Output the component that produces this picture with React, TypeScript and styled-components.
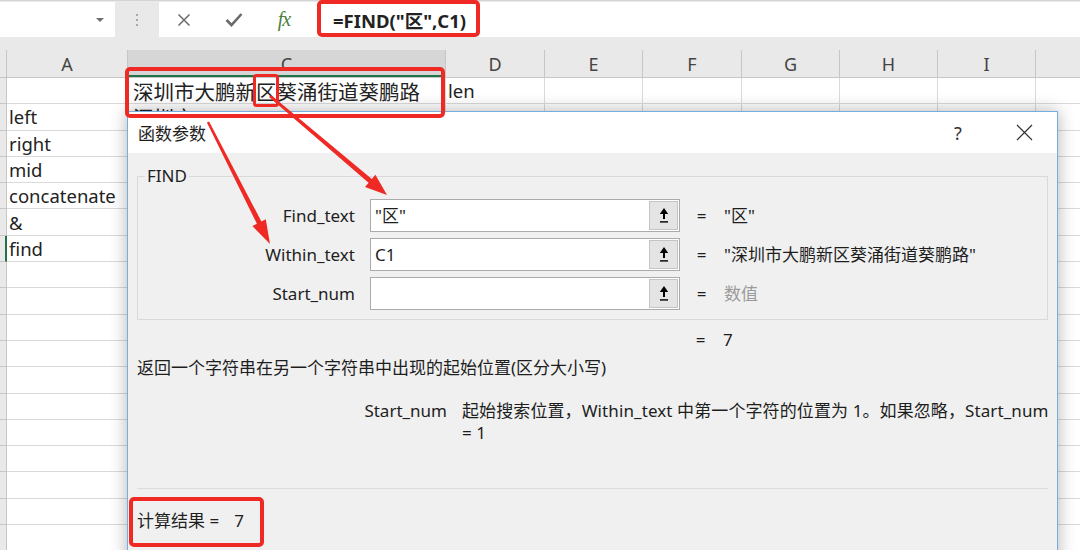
import React from 'react';
import styled, { createGlobalStyle } from 'styled-components';

const GlobalStyle = createGlobalStyle`
  html, body { margin: 0; padding: 0; background: #fff; }
  body { font-family: "Noto Sans", "Noto Sans CJK SC", sans-serif; }
`;

const Page = styled.div`
  position: relative;
  width: 1080px;
  height: 550px;
  overflow: hidden;
  background: #fff;
  font-family: "Noto Sans", "Noto Sans CJK SC", sans-serif;
  color: #222;
`;

/* ---------- formula bar ---------- */
const FormulaBar = styled.div`
  display: flex;
  height: 37px;
  box-sizing: border-box;
  padding-top: 1px;
  border-top: 1px solid #d4d4d4;
  background: #e9e9e9;
`;

const NameBox = styled.div`
  width: 115px;
  flex: none;
  background: #fff;
  display: flex;
  align-items: center;
  justify-content: flex-end;
  padding-right: 11px;
  box-sizing: border-box;
`;

const Caret = styled.div`
  width: 0;
  height: 0;
  border-left: 4px solid transparent;
  border-right: 4px solid transparent;
  border-top: 4px solid #6e6e6e;
`;

const Grip = styled.div`
  width: 44px;
  flex: none;
  display: flex;
  flex-direction: column;
  align-items: center;
  justify-content: center;
  gap: 3px;
`;

const GripDot = styled.div`
  width: 2px;
  height: 2px;
  background: #a8a8a8;
`;

const IconBox = styled.div`
  width: 151px;
  flex: none;
  background: #fff;
  display: flex;
`;

const IconSlot = styled.div`
  width: 50px;
  display: flex;
  align-items: center;
  justify-content: center;
`;

const Fx = styled.span`
  font-family: "Liberation Serif", serif;
  font-style: italic;
  font-size: 20px;
  color: #4d7f3d;
  letter-spacing: -1px;
`;

const FormulaInput = styled.div`
  flex: 1;
  background: #fff;
  display: flex;
  align-items: center;
  padding-left: 23px;
  font-weight: 700;
  font-size: 18.5px;
  color: #222;
  white-space: nowrap;
`;

const Band = styled.div`
  height: 13px;
  background: #e9e9e9;
`;

/* ---------- sheet ---------- */
const HeaderRow = styled.div`
  display: flex;
  height: 28px;
  background: #e9e9e9;
  border-bottom: 1px solid #c6c6c6;
  box-sizing: border-box;
`;

const Corner = styled.div`
  width: 7px;
  flex: none;
  border-right: 1px solid #c6c6c6;
  box-sizing: border-box;
`;

const ColHeader = styled.div<{ $w: number; $selected?: boolean }>`
  width: ${(p) => p.$w}px;
  flex: none;
  box-sizing: border-box;
  border-right: 1px solid #c6c6c6;
  display: flex;
  align-items: center;
  justify-content: center;
  font-size: 18px;
  color: #444;
  background: ${(p) => (p.$selected ? '#d6d6d6' : 'transparent')};
  box-shadow: ${(p) => (p.$selected ? 'inset 0 -2px 0 #217346' : 'none')};
`;

const Row = styled.div`
  display: flex;
  height: 26.3px;
`;

const RowHeader = styled.div<{ $active?: boolean }>`
  width: 7px;
  flex: none;
  box-sizing: border-box;
  background: #e9e9e9;
  border-bottom: 1px solid #c6c6c6;
  border-right: ${(p) => (p.$active ? '2px solid #217346' : '1px solid #c6c6c6')};
`;

const Cell = styled.div<{ $w: number }>`
  width: ${(p) => p.$w}px;
  flex: none;
  box-sizing: border-box;
  border-right: 1px solid #dadada;
  border-bottom: 1px solid #dadada;
  display: flex;
  align-items: center;
  padding-left: 2px;
  white-space: nowrap;
  overflow: hidden;
`;

const CellText = styled.span<{ $cjk?: boolean }>`
  font-size: ${(p) => (p.$cjk ? '20.5px' : '18.5px')};
  padding-left: ${(p) => (p.$cjk ? '3px' : '0')};
  color: #222;
`;

/* ---------- dialog ---------- */
const Dialog = styled.div`
  position: absolute;
  left: 127px;
  top: 111px;
  width: 931px;
  height: 470px;
  box-sizing: border-box;
  border: 1px solid #78acdf;
  background: #f0f0f0;
  box-shadow: 0 0 16px rgba(0, 0, 0, 0.3);
  display: flex;
  flex-direction: column;
  font-size: 17px;
  color: #1e1e1e;
`;

const TitleBar = styled.div`
  height: 41px;
  flex: none;
  background: #fff;
  display: flex;
  align-items: center;
  padding-left: 10px;
  padding-right: 10px;
  gap: 20px;
`;

const Title = styled.div`
  flex: 1;
  font-size: 17px;
`;

const TitleButton = styled.div`
  width: 46px;
  height: 41px;
  display: flex;
  align-items: center;
  justify-content: center;
  color: #333;
  font-size: 18px;
`;

const Body = styled.div`
  padding: 12px 9px 0 9px;
  display: flex;
  flex-direction: column;
`;

const Group = styled.fieldset`
  margin: 0;
  padding: 12px 0 9px 0;
  border: 1px solid #d9d9d9;
  min-width: 0;
`;

const Legend = styled.legend`
  margin-left: 7px;
  padding: 0 2px;
  font-size: 17px;
  line-height: 22px;
`;

const ParamGrid = styled.div<{ $top?: number }>`
  display: grid;
  grid-template-columns: 232px 310px 43px 1fr;
  row-gap: 6px;
  align-items: center;
  line-height: 22px;
  margin-top: ${(p) => p.$top ?? 0}px;
`;

const ParamLabel = styled.div`
  text-align: right;
  padding-right: 15px;
`;

const InputBox = styled.div`
  height: 33px;
  box-sizing: border-box;
  border: 1px solid #ababab;
  background: #fff;
  display: flex;
`;

const InputText = styled.div`
  flex: 1;
  display: flex;
  align-items: center;
  padding-left: 4px;
  white-space: nowrap;
`;

const RefButton = styled.div`
  width: 29px;
  margin: 1px;
  background: #e4e4e4;
  border: 1px solid #c4c4c4;
  box-sizing: border-box;
  display: flex;
  align-items: center;
  justify-content: center;
`;

const Eq = styled.div`
  text-align: center;
`;

const Value = styled.div<{ $muted?: boolean }>`
  color: ${(p) => (p.$muted ? '#9a9a9a' : '#1e1e1e')};
  padding-left: 1px;
  white-space: nowrap;
`;

const Description = styled.div`
  margin-top: 6px;
  line-height: 22px;
  white-space: nowrap;
`;

const HelpGrid = styled.div`
  margin-top: 21px;
  display: grid;
  grid-template-columns: 310px 1fr;
  column-gap: 15px;
  line-height: 22px;
`;

const HelpName = styled.div`
  text-align: right;
`;

const HelpText = styled.div`
  white-space: nowrap;
  letter-spacing: 0.1px;
`;

const Separator = styled.div`
  margin-top: 44px;
  height: 1px;
  background: #dcdcdc;
`;

const Result = styled.div`
  margin-top: 21px;
  display: flex;
  gap: 15px;
  line-height: 22px;
`;

/* ---------- annotations ---------- */
const Overlay = styled.svg`
  position: absolute;
  left: 0;
  top: 0;
  pointer-events: none;
`;

const RED = '#ef2a25';

function arrowPoints(
  sx: number,
  sy: number,
  tx: number,
  ty: number,
  w0: number,
  w1: number,
  headLen: number,
  headW: number
) {
  const dx = tx - sx;
  const dy = ty - sy;
  const len = Math.hypot(dx, dy);
  const ux = dx / len;
  const uy = dy / len;
  const nx = -uy;
  const ny = ux;
  const bx = tx - ux * headLen;
  const by = ty - uy * headLen;
  const pts = [
    [sx + (nx * w0) / 2, sy + (ny * w0) / 2],
    [bx + (nx * w1) / 2, by + (ny * w1) / 2],
    [bx + (nx * headW) / 2, by + (ny * headW) / 2],
    [tx, ty],
    [bx - (nx * headW) / 2, by - (ny * headW) / 2],
    [bx - (nx * w1) / 2, by - (ny * w1) / 2],
    [sx - (nx * w0) / 2, sy - (ny * w0) / 2],
  ];
  return pts.map((p) => `${p[0].toFixed(1)},${p[1].toFixed(1)}`).join(' ');
}

const RefIcon = () => (
  <svg width="10" height="17" viewBox="0 0 10 17">
    <path d="M5 1 L0.8 7 H4 V12 H6 V7 H9.2 Z" fill="#000" />
    <rect x="1" y="14.2" width="8" height="1.4" fill="#000" />
  </svg>
);

const columns = [
  { key: 'A', label: 'A', w: 121 },
  { key: 'C', label: 'C', w: 318, selected: true },
  { key: 'D', label: 'D', w: 99 },
  { key: 'E', label: 'E', w: 98 },
  { key: 'F', label: 'F', w: 99 },
  { key: 'G', label: 'G', w: 98 },
  { key: 'H', label: 'H', w: 98 },
  { key: 'I', label: 'I', w: 98 },
  { key: 'J', label: '', w: 98 },
];

type RowData = { A?: string; C?: string; D?: string; active?: boolean };

const rows: RowData[] = [
  { C: '深圳市大鹏新区葵涌街道葵鹏路', D: 'len' },
  { A: 'left', C: '深圳市' },
  { A: 'right' },
  { A: 'mid' },
  { A: 'concatenate' },
  { A: '&' },
  { A: 'find', active: true },
  ...Array.from({ length: 11 }, () => ({})),
];

const isCjk = (s: string) => /[\u4e00-\u9fff]/.test(s);

export default function App() {
  return (
    <Page>
      <GlobalStyle />
      <FormulaBar>
        <NameBox>
          <Caret />
        </NameBox>
        <Grip>
          <GripDot />
          <GripDot />
          <GripDot />
        </Grip>
        <IconBox>
          <IconSlot>
            <svg width="14" height="14" viewBox="0 0 14 14">
              <path d="M1.5 1.5 L12.5 12.5 M12.5 1.5 L1.5 12.5" stroke="#6a6a6a" strokeWidth="1.5" />
            </svg>
          </IconSlot>
          <IconSlot>
            <svg width="18" height="15" viewBox="0 0 18 15">
              <path d="M1.5 8 L6.5 13 L16.5 2" stroke="#6a6a6a" strokeWidth="2.6" fill="none" />
            </svg>
          </IconSlot>
          <IconSlot>
            <Fx>fx</Fx>
          </IconSlot>
        </IconBox>
        <FormulaInput>=FIND("区",C1)</FormulaInput>
      </FormulaBar>
      <Band />
      <HeaderRow>
        <Corner />
        {columns.map((c) => (
          <ColHeader key={c.key} $w={c.w} $selected={c.selected}>
            {c.label}
          </ColHeader>
        ))}
      </HeaderRow>
      {rows.map((r, i) => (
        <Row key={i}>
          <RowHeader $active={r.active} />
          {columns.map((c) => {
            const v = (r as Record<string, string | undefined>)[c.key];
            return (
              <Cell key={c.key} $w={c.w}>
                {v ? <CellText $cjk={isCjk(v)}>{v}</CellText> : null}
              </Cell>
            );
          })}
        </Row>
      ))}

      <Dialog>
        <TitleBar>
          <Title>函数参数</Title>
          <TitleButton>?</TitleButton>
          <TitleButton>
            <svg width="17" height="17" viewBox="0 0 17 17">
              <path d="M1 1 L16 16 M16 1 L1 16" stroke="#333" strokeWidth="1.2" />
            </svg>
          </TitleButton>
        </TitleBar>
        <Body>
          <Group>
            <Legend>FIND</Legend>
            <ParamGrid>
              <ParamLabel>Find_text</ParamLabel>
              <InputBox>
                <InputText>"区"</InputText>
                <RefButton>
                  <RefIcon />
                </RefButton>
              </InputBox>
              <Eq>=</Eq>
              <Value>"区"</Value>

              <ParamLabel>Within_text</ParamLabel>
              <InputBox>
                <InputText>C1</InputText>
                <RefButton>
                  <RefIcon />
                </RefButton>
              </InputBox>
              <Eq>=</Eq>
              <Value>"深圳市大鹏新区葵涌街道葵鹏路"</Value>

              <ParamLabel>Start_num</ParamLabel>
              <InputBox>
                <InputText />
                <RefButton>
                  <RefIcon />
                </RefButton>
              </InputBox>
              <Eq>=</Eq>
              <Value $muted>数值</Value>
            </ParamGrid>
          </Group>
          <ParamGrid $top={9}>
            <div />
            <div />
            <Eq>=</Eq>
            <Value>7</Value>
          </ParamGrid>
          <Description>返回一个字符串在另一个字符串中出现的起始位置(区分大小写)</Description>
          <HelpGrid>
            <HelpName>Start_num</HelpName>
            <HelpText>
              起始搜索位置，Within_text 中第一个字符的位置为 1。如果忽略，Start_num
              <br />= 1
            </HelpText>
          </HelpGrid>
          <Separator />
          <Result>
            <span>计算结果 =</span>
            <span>7</span>
          </Result>
        </Body>
      </Dialog>

      <Overlay width="1080" height="550" viewBox="0 0 1080 550">
        <rect x="319" y="2" width="159" height="33" rx="3" fill="none" stroke={RED} strokeWidth="4" />
        <rect x="127" y="69" width="316" height="47" rx="3" fill="none" stroke={RED} strokeWidth="4" />
        <rect x="254.5" y="75.5" width="23" height="30" rx="2" fill="none" stroke={RED} strokeWidth="3" />
        <rect x="131" y="499" width="131" height="46" rx="3" fill="none" stroke={RED} strokeWidth="4" />
        <polygon points={arrowPoints(270, 96, 387, 195, 3, 5, 22, 16)} fill={RED} />
        <polygon points={arrowPoints(208, 122, 270, 244, 2.5, 5, 24, 15)} fill={RED} />
      </Overlay>
    </Page>
  );
}
